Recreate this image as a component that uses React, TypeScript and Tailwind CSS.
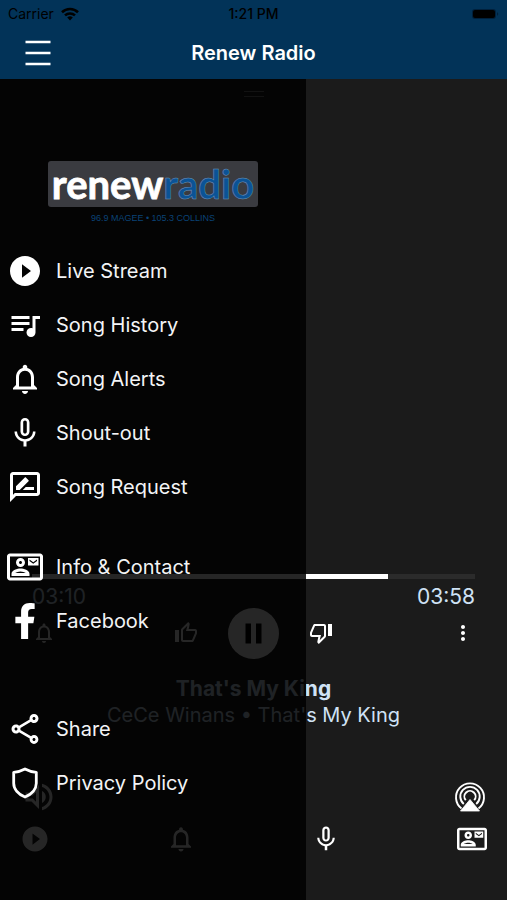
import type { IconType } from 'react-icons';
import { FaFacebookF } from 'react-icons/fa';
import {
  MdMicNone,
  MdMoreVert,
  MdNotificationsNone,
  MdOutlineContactMail,
  MdOutlineRateReview,
  MdOutlineShare,
  MdOutlineThumbDown,
  MdOutlineThumbUp,
  MdOutlineVolumeUp,
  MdPlayCircleFilled,
  MdQueueMusic,
} from 'react-icons/md';

const ShieldIcon: IconType = ({ className }) => (
  <svg className={className} viewBox="0 0 36 36" fill="none" stroke="currentColor" strokeWidth="2.8" strokeLinejoin="round">
    <path d="M18 4c3.500 1.900 7 3 11.300 3.300v11c0 5.700-4.500 11-11.300 13.700-6.800-2.700-11.300-8-11.300-13.700v-11C11 7 14.500 5.900 18 4z" />
  </svg>
);

type MenuItem = { label: string; icon: IconType };

const streamItems: MenuItem[] = [
  { label: 'Live Stream', icon: MdPlayCircleFilled },
  { label: 'Song History', icon: MdQueueMusic },
  { label: 'Song Alerts', icon: MdNotificationsNone },
  { label: 'Shout-out', icon: MdMicNone },
  { label: 'Song Request', icon: MdOutlineRateReview },
];

const contactItems: MenuItem[] = [
  { label: 'Info & Contact', icon: MdOutlineContactMail },
  { label: 'Facebook', icon: FaFacebookF },
];

const appItems: MenuItem[] = [
  { label: 'Share', icon: MdOutlineShare },
  { label: 'Privacy Policy', icon: ShieldIcon },
];

const tabs: MenuItem[] = [
  { label: 'Live', icon: MdPlayCircleFilled },
  { label: 'Alerts', icon: MdNotificationsNone },
  { label: 'Shout', icon: MdMicNone },
  { label: 'Contact', icon: MdOutlineContactMail },
];

const StatusBar = () => (
  <div className="grid h-[27px] grid-cols-3 items-center px-2 text-sm text-black">
    <div className="flex items-center gap-1.5">
      <span>Carrier</span>
      <svg width="20" height="14" viewBox="0 0 20 14" fill="none" stroke="currentColor" strokeWidth="2.6">
        <path d="M2 5.2a11.6 11.6 0 0 1 16 0" />
        <path d="M5 8.4a7.4 7.4 0 0 1 10 0" />
        <path d="M7.2 10.6a4.2 4.2 0 0 1 5.6 0L10 13.5z" fill="currentColor" stroke="none" />
      </svg>
    </div>
    <span className="text-center font-medium">1:21 PM</span>
    <svg className="justify-self-end" width="28" height="12" viewBox="0 0 28 12">
      <rect x="1" y="1" width="24" height="10" rx="3" fill="#00203c" />
      <rect x="2" y="2" width="22" height="8" rx="2" />
      <path d="M26 4.2v3.6c.8-.3 1.2-1 1.2-1.8s-.4-1.500-1.200-1.800z" fill="#00203c" />
    </svg>
  </div>
);

const Header = () => (
  <header className="bg-[#023358]">
    <StatusBar />
    <div className="grid h-[52px] grid-cols-[1fr_auto_1fr] items-center px-[25px]">
      <button aria-label="Menu" className="justify-self-start text-white">
        <svg width="26" height="26" viewBox="0 0 26 26" stroke="currentColor" strokeWidth="2.400">
          <path d="M.5 2h25M.5 13h25M.5 24h25" />
        </svg>
      </button>
      <h1 className="text-xl font-semibold text-white">Renew Radio</h1>
    </div>
  </header>
);

const Logo = () => (
  <svg className="mx-auto" width="212" height="78" viewBox="0 0 212 78">
    <rect x="1" y="15" width="210" height="46" rx="3" fill="#3a3b40" />
    <text
      x="106"
      y="53"
      fontSize="40"
      fontWeight="700"
      textAnchor="middle"
      fontFamily="Lato, 'Liberation Sans', sans-serif">
      <tspan fill="#ffffff" stroke="#ffffff" strokeWidth="0.8">
        renew
      </tspan>
      <tspan fill="#0b5396" stroke="#6f94b8" strokeWidth="0.5">
        radio
      </tspan>
    </text>
    <text
      x="106"
      y="75"
      fontSize="9"
      textAnchor="middle"
      fill="#0a4377"
      fontFamily="'Liberation Sans', sans-serif">
      96.9 MAGEE • 105.3 COLLINS
    </text>
  </svg>
);

const MenuGroup = ({ items }: { items: MenuItem[] }) => (
  <ul>
    {items.map(({ label, icon: Icon }) => (
      <li key={label}>
        <a href="#" className="flex h-[54px] items-center gap-[13px] px-[7px] text-xl text-gray-100">
          <Icon className="size-9 shrink-0 text-white" />
          {label}
        </a>
      </li>
    ))}
  </ul>
);

const Drawer = () => (
  <nav className="absolute inset-y-0 left-0 w-[306px] bg-black/85 pt-[67px]">
    <Logo />
    <div className="pt-5">
      <MenuGroup items={streamItems} />
      <div className="h-[26px]" />
      <MenuGroup items={contactItems} />
      <div className="h-[54px]" />
      <MenuGroup items={appItems} />
    </div>
  </nav>
);

const AirPlayIcon = () => (
  <svg width="32" height="32" viewBox="0 0 32 32" fill="none" stroke="currentColor" strokeWidth="1.900">
    <path d="M7.500 27.500a14 14 0 1 1 17 0" />
    <path d="M9.800 23a9.700 9.700 0 1 1 12.400 0" />
    <path d="M11.800 19.200a5.600 5.600 0 1 1 8.400 0" />
    <path d="M16 18.500 25.500 30h-19z" fill="currentColor" stroke="currentColor" strokeWidth="0.8" strokeLinejoin="round" />
  </svg>
);

const Player = () => (
  <section className="flex flex-1 flex-col text-white">
    <div className="mx-auto mt-3 flex h-1.5 w-5 flex-col justify-between text-[#777777]">
      <div className="h-px bg-current" />
      <div className="h-px bg-current" />
    </div>

    <div className="mt-auto px-8">
      <div role="progressbar" aria-label="Progress" aria-valuenow={80} className="h-[5px] bg-[#2b2b2b]">
        <div className="h-full bg-white" style={{ width: '80.4%' }} />
      </div>
      <div className="flex h-9 items-center justify-between text-[21px] text-[#cfe2f5]">
        <span>03:10</span>
        <span>03:58</span>
      </div>
    </div>

    <div className="grid grid-cols-[1fr_auto_1fr] grid-rows-[36px] items-center px-8">
      <button aria-label="Song alert" className="justify-self-start">
        <MdNotificationsNone className="size-6" />
      </button>
      <div className="flex items-center gap-[30px]">
        <button aria-label="Like">
          <MdOutlineThumbUp className="size-6" />
        </button>
        <button aria-label="Pause">
          <svg width="51" height="51" viewBox="0 0 51 51">
            <circle cx="25.500" cy="25.500" r="25.500" fill="currentColor" />
            <path d="M17.500 15.500h5.500v20h-5.500zM28 15.500h5.500v20H28z" fill="#000" />
          </svg>
        </button>
        <button aria-label="Dislike">
          <MdOutlineThumbDown className="size-6" />
        </button>
      </div>
      <button aria-label="More" className="justify-self-end">
        <MdMoreVert className="size-6" />
      </button>
    </div>

    <div className="pt-[25px] text-center leading-[26px] text-[#cfe2f5]">
      <h2 className="text-[21px] leading-[26px] font-bold">That's My King</h2>
      <p className="text-xl leading-[26px]">CeCe Winans • That's My King</p>
    </div>

    <div className="mt-[51px] flex items-center justify-between px-[21px]">
      <button aria-label="Volume">
        <MdOutlineVolumeUp className="size-9" />
      </button>
      <button aria-label="AirPlay">
        <AirPlayIcon />
      </button>
    </div>

    <div className="mb-[46px] mt-[9px] flex items-center justify-between px-5">
      {tabs.map(({ label, icon: Icon }) => (
        <button key={label} aria-label={label}>
          <Icon className="size-[30px]" />
        </button>
      ))}
    </div>
  </section>
);

const App = () => {
  return (
    <div className="flex min-h-screen flex-col bg-[#1b1b1b] font-['Inter','Liberation_Sans',sans-serif]">
      <Header />
      <main className="relative flex flex-1 flex-col">
        <Player />
        <Drawer />
      </main>
    </div>
  );
};

export default App;
